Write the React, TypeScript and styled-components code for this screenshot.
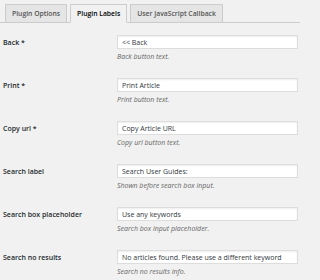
import React from "react";
import styled, { createGlobalStyle } from "styled-components";

const GlobalStyle = createGlobalStyle`
  html, body {
    margin: 0;
    padding: 0;
    background: #f1f1f1;
  }
  body {
    font-family: "Open Sans", "Noto Sans", sans-serif;
    color: #23282d;
  }
`;

const Page = styled.div`
  width: 300px;
  height: 280px;
  overflow: hidden;
  background: #f1f1f1;
`;

const TabBar = styled.nav`
  display: flex;
  align-items: flex-end;
  gap: 3px;
  height: 23px;
  padding-left: 5px;
  border-bottom: 1px solid #ccc;
  box-sizing: border-box;
`;

const Tab = styled.a<{ $active?: boolean }>`
  display: flex;
  align-items: center;
  height: 19px;
  padding: 0 6px;
  margin-bottom: -1px;
  border: 1px solid #ccc;
  border-bottom-color: ${(p) => (p.$active ? "#f1f1f1" : "#ccc")};
  background: ${(p) => (p.$active ? "#f1f1f1" : "#e5e5e5")};
  color: ${(p) => (p.$active ? "#000" : "#555")};
  font-size: 6.8px;
  font-weight: 600;
  text-decoration: none;
  white-space: nowrap;
  box-sizing: border-box;
`;

const Form = styled.div`
  padding-top: 12px;
`;

const Row = styled.div`
  display: grid;
  grid-template-columns: 114px 1fr;
  height: 43px;
  padding: 0 2px 0 3px;
`;

const Label = styled.label`
  font-size: 7px;
  font-weight: 600;
  line-height: 14px;
  padding-top: 1px;
  color: #23282d;
  white-space: nowrap;
`;

const Field = styled.div`
  display: flex;
  flex-direction: column;
`;

const Input = styled.input`
  height: 14px;
  width: 100%;
  box-sizing: border-box;
  margin: 0;
  padding: 0 4px;
  border: 1px solid #ddd;
  box-shadow: inset 0 1px 2px rgba(0, 0, 0, 0.07);
  background: #fff;
  color: #32373c;
  font-family: "Open Sans", "Noto Sans", sans-serif;
  font-size: 7px;
  outline: none;
`;

const Description = styled.p`
  margin: 3px 0 0;
  font-size: 7px;
  font-style: italic;
  color: #666;
  line-height: 10px;
`;

const fields = [
  { label: "Back *", value: "<< Back", help: "Back button text." },
  { label: "Print *", value: "Print Article", help: "Print button text." },
  { label: "Copy url *", value: "Copy Article URL", help: "Copy url button text." },
  { label: "Search label", value: "Search User Guides:", help: "Shown before search box input." },
  { label: "Search box placeholder", value: "Use any keywords", help: "Search box input placeholder." },
  {
    label: "Search no results",
    value: "No articles found. Please use a different keyword",
    help: "Search no results info.",
  },
];

export default function App() {
  return (
    <Page>
      <GlobalStyle />
      <TabBar>
        <Tab>Plugin Options</Tab>
        <Tab $active>Plugin Labels</Tab>
        <Tab>User JavaScript Callback</Tab>
      </TabBar>
      <Form>
        {fields.map((f) => (
          <Row key={f.label}>
            <Label>{f.label}</Label>
            <Field>
              <Input defaultValue={f.value} readOnly />
              <Description>{f.help}</Description>
            </Field>
          </Row>
        ))}
      </Form>
    </Page>
  );
}
